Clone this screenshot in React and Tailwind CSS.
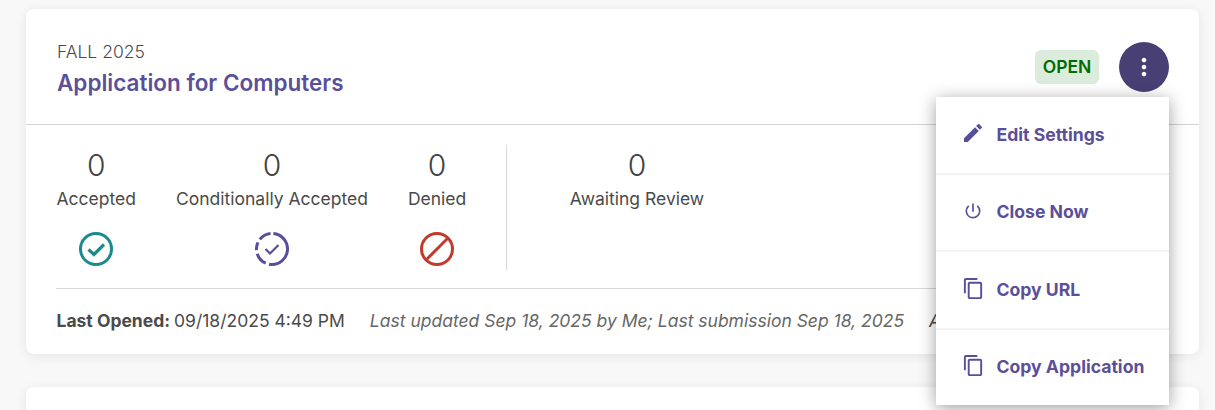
import React from "react";
import { MdEdit, MdOutlineContentCopy, MdOutlinePowerSettingsNew, MdMoreVert } from "react-icons/md";

const stats = [
  { label: "Accepted", icon: "accepted" },
  { label: "Conditionally Accepted", icon: "conditional" },
  { label: "Denied", icon: "denied" },
];

const menuItems = [
  { label: "Edit Settings", Icon: MdEdit, size: 24 },
  { label: "Close Now", Icon: MdOutlinePowerSettingsNew, size: 20 },
  { label: "Copy URL", Icon: MdOutlineContentCopy, size: 23 },
  { label: "Copy Application", Icon: MdOutlineContentCopy, size: 23 },
];

const StatIcon = ({ type }) => {
  if (type === "accepted") {
    return (
      <svg width="36" height="36" viewBox="0 0 36 36" fill="none" stroke="#1b8a8f" strokeWidth="3">
        <circle cx="18" cy="18" r="15.5" />
        <path d="M10.5 18.5l5.5 5 10-10" strokeWidth="3.2" />
      </svg>
    );
  }
  if (type === "conditional") {
    return (
      <svg width="36" height="36" viewBox="0 0 36 36" fill="none" stroke="#584f9c" strokeWidth="3">
        <circle cx="18" cy="18" r="15.5" strokeDasharray="50 3.5 13 3.5 8 3.5 12.4 3.5" transform="rotate(-85 18 18)" />
        <path d="M11.5 18l4.5 4.5 8.5-8.5" strokeWidth="2.2" />
      </svg>
    );
  }
  return (
    <svg width="36" height="36" viewBox="0 0 36 36" fill="none" stroke="#c23a2b" strokeWidth="3">
      <circle cx="18" cy="18" r="15.5" />
      <path d="M7 29L29 7" />
    </svg>
  );
};

const Stat = ({ label, icon }) => (
  <div className="flex flex-col items-center pt-[3px]">
    <div className="text-[30px] leading-[35px] font-light text-[#444]">0</div>
    <div className="mt-[4px] text-[17.5px] leading-[24px] text-[#4a4a4a] whitespace-nowrap">{label}</div>
    {icon && (
      <div className="mt-[20px] h-[36px]">
        <StatIcon type={icon} />
      </div>
    )}
  </div>
);

export default function App() {
  return (
    <div
      className="relative h-[410px] overflow-hidden bg-[#f8f8f8] pt-[9px] pl-[26px] pr-[16px]"
      style={{ fontFamily: "Inter, 'Noto Sans', sans-serif" }}
    >
      <div className="bg-white rounded-lg shadow-[0_2px_12px_rgba(0,0,0,0.08)] overflow-hidden h-[345px]">
        {/* Header */}
        <div className="flex items-center justify-between h-[116px] pl-[31px] pr-[30px] border-b border-[#d2d2d2]">
          <div className="mt-[4px]">
            <div className="text-[17.5px] leading-[24px] font-light text-[#4a4a4a]">FALL 2025</div>
            <div className="mt-[4px] text-[22.5px] leading-[30px] font-semibold text-[#5b4f9a]">Application for Computers</div>
          </div>
          <div className="flex items-center gap-[20px] mt-[1px]">
            <span className="flex items-center justify-center h-[34px] w-[64px] rounded-md bg-[#dcecdc] text-[#006b00] text-[17.5px] font-semibold">OPEN</span>
            <button className="flex items-center justify-center w-[50px] h-[50px] rounded-full bg-[#483f75] text-white">
              <MdMoreVert size={28} />
            </button>
          </div>
        </div>

        {/* Stats */}
        <div className="flex pt-[20px] pl-[30.5px] pr-[30px] h-[163px]">
          <div className="flex gap-[40px] h-[125px] pr-[39.5px] border-r border-[#d8d8d8]">
            {stats.map((s) => (
              <Stat key={s.label} label={s.label} icon={s.icon} />
            ))}
          </div>
          <div className="pl-[63px]">
            <Stat label="Awaiting Review" />
          </div>
        </div>

        {/* Footer */}
        <div className="mx-[30px] h-[66px] flex items-center border-t border-[#d8d8d8] text-[17.5px] whitespace-nowrap text-[#4a4a4a]">
          <span className="ml-[0.5px] font-bold">Last Opened:</span>
          <span className="ml-[4px]">09/18/2025 4:49 PM</span>
          <span className="ml-[25px] italic text-[#666]">Last updated Sep 18, 2025 by Me; Last submission Sep 18, 2025</span>
          <span className="ml-[25px] italic">Applications</span>
        </div>
      </div>

      <div className="mt-[33px] bg-white rounded-lg h-[100px] shadow-[0_2px_12px_rgba(0,0,0,0.08)]"></div>

      {/* Dropdown menu */}
      <div className="absolute left-[936px] top-[97px] w-[233px] h-[308px] bg-white shadow-[0_3px_16px_rgba(0,0,0,0.38)] flex flex-col">
        {menuItems.map(({ label, Icon, size }, i) => (
          <div
            key={label}
            className={
              i < 3
                ? "flex-1 flex items-center pl-[25px] border-b-2 border-[#f3f3f3]"
                : "flex-1 flex items-center pl-[25px]"
            }
          >
            <span className="w-[24px] flex justify-center text-[#584f9c] -mt-[3px]">
              <Icon size={size} />
            </span>
            <span className="ml-[11.5px] text-[17.6px] font-bold text-[#5b4f9a] whitespace-nowrap">{label}</span>
          </div>
        ))}
      </div>
    </div>
  );
}
